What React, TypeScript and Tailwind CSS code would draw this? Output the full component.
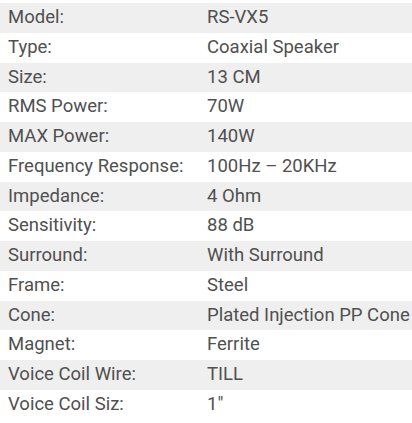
const specs: [string, string][] = [
  ['Model:', 'RS-VX5'],
  ['Type:', 'Coaxial Speaker'],
  ['Size:', '13 CM'],
  ['RMS Power:', '70W'],
  ['MAX Power:', '140W'],
  ['Frequency Response:', '100Hz – 20KHz'],
  ['Impedance:', '4 Ohm'],
  ['Sensitivity:', '88 dB'],
  ['Surround:', 'With Surround'],
  ['Frame:', 'Steel'],
  ['Cone:', 'Plated Injection PP Cone'],
  ['Magnet:', 'Ferrite'],
  ['Voice Coil Wire:', 'TILL'],
  ['Voice Coil Siz:', '1"'],
]

export default function App() {
  return (
    <div className="w-[412px] h-[423px] overflow-hidden bg-white pt-[3px] font-['Roboto',sans-serif] text-[18.5px] leading-[29.75px] text-[#505050]">
      {specs.map(([label, value], i) => (
        <div
          key={label}
          className={`flex whitespace-nowrap ${i % 2 === 0 ? 'bg-[#efefef]' : 'bg-white'}`}
        >
          <div className="w-[207px] shrink-0 pl-2">{label}</div>
          <div>{value}</div>
        </div>
      ))}
    </div>
  )
}
